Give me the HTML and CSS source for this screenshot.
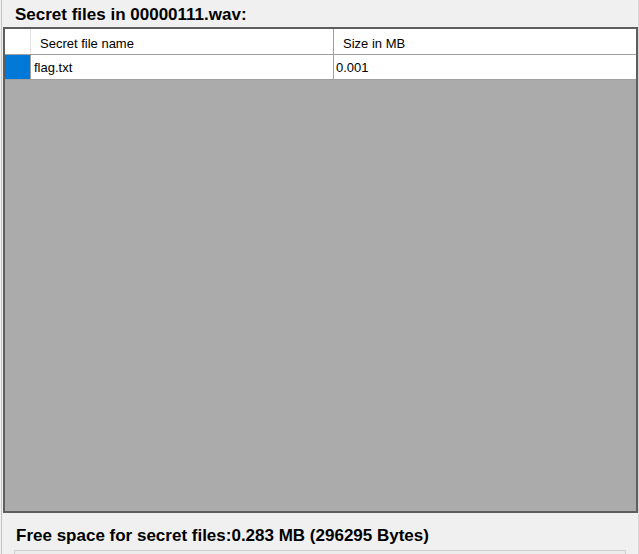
FILE: index.html
```html
<!DOCTYPE html>
<html>
<head>
<meta charset="utf-8">
<link rel="stylesheet" href="styles.css">
</head>
<body>
<div class="frame">
  <div class="title">Secret files in 00000111.wav:</div>
  <div class="grid">
    <div class="row head">
      <div class="cell rh"></div>
      <div class="cell c1">Secret file name</div>
      <div class="cell c2">Size in MB</div>
    </div>
    <div class="row data">
      <div class="cell rh sel"></div>
      <div class="cell c1">flag.txt</div>
      <div class="cell c2">0.001</div>
    </div>
  </div>
  <div class="footer">
    <div class="free">Free space for secret files:0.283 MB (296295 Bytes)</div>
    <div class="bar"></div>
  </div>
</div>
</body>
</html>
```
FILE: styles.css
```css
html, body {
  margin: 0;
  padding: 0;
  background: #f0f0f0;
  height: 554px;
  overflow: hidden;
}
.frame {
  margin-left: 1px;
  width: 636px;
  height: 554px;
  overflow: hidden;
  border-left: 1px solid #c4c4c4;
  border-right: 1px solid #d6d6d6;
  display: flex;
  flex-direction: column;
  font-family: "Liberation Sans", Arial, sans-serif;
  color: #000;
}
.title {
  flex-shrink: 0;
  height: 27px;
  box-sizing: border-box;
  padding: 5px 0 0 13px;
  font-weight: bold;
  font-size: 17px;
  line-height: 20px;
}
.grid {
  flex-shrink: 0;
  margin-left: 1px;
  height: 486px;
  box-sizing: border-box;
  border: 2px solid #5e5e5e;
  background: #ababab;
  display: flex;
  flex-direction: column;
  font-size: 13px;
}
.row {
  display: flex;
  background: #fff;
  border-bottom: 1px solid #a0a0a0;
}
.head { height: 25px; border-bottom: 1px solid #cfcfcf; }
.data { height: 24px; border-top: 1px solid #a0a0a0; margin-top: -1px; }
.cell {
  box-sizing: border-box;
  border-right: 1px solid #a0a0a0;
  white-space: nowrap;
}
.rh { width: 26px; }
.c1 { width: 303px; }
.c2 { flex: 1; border-right: none; }
.head .cell { line-height: 25px; padding-top: 2px; }
.head .c1, .head .c2 { padding-left: 9px; }
.head .rh { border-right-color: #e2e2e2; }
.data .cell { line-height: 24px; padding-top: 1px; }
.data .c1 { padding-left: 3px; }
.data .c2 { padding-left: 2px; }
.sel { background: #0078d7; }
.footer {
  flex: 1;
  min-height: 0;
  display: flex;
  flex-direction: column;
}
.free {
  flex-shrink: 0;
  margin-top: 13px;
  padding-left: 14px;
  font-weight: bold;
  font-size: 17px;
  line-height: 20px;
}
.bar {
  flex-shrink: 0;
  margin: 4px 0 0 12px;
  width: 612px;
  height: 10px;
  box-sizing: border-box;
  border: 1px solid #cfcfcf;
  background: #ececec;
}
```
